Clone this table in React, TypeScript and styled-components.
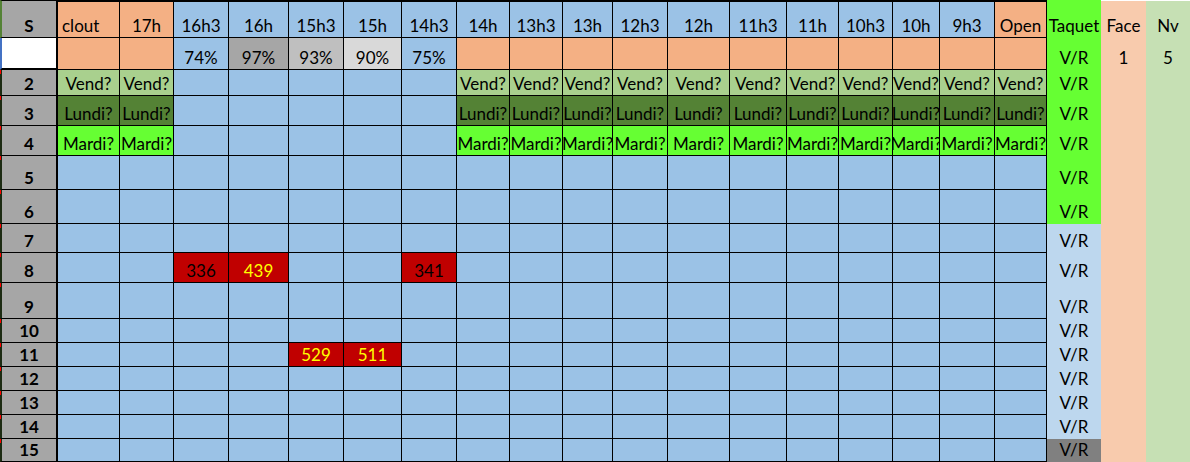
import React from "react";
import styled, { createGlobalStyle } from "styled-components";

const GlobalStyle = createGlobalStyle`
  html, body {
    margin: 0;
    padding: 0;
    background: #ffffff;
    overflow: hidden;
  }
  body {
    font-family: Lato, "Liberation Sans", sans-serif;
  }
`;

const C = {
  grey: "#a6a6a6",
  orange: "#f4b084",
  blue: "#9bc2e6",
  lightGreen: "#a9d08e",
  darkGreen: "#548235",
  brightGreen: "#66ff33",
  red: "#c00000",
  yellow: "#ffff00",
  paleBlue: "#bdd7ee",
  midGrey: "#808080",
  face: "#f8cbad",
  nv: "#c6e0b4",
};

const colWidths = [58, 62, 54, 55, 60, 55, 58, 55, 53, 53, 50, 55, 62, 57, 52, 54, 47, 55, 52, 54, 45, 44];
const rowHeights = [38, 32, 26, 30, 30, 34, 34, 29, 30, 36, 24, 24, 24, 24, 24, 23];

const hours = ["clout", "17h", "16h3", "16h", "15h3", "15h", "14h3", "14h", "13h3", "13h", "12h3", "12h", "11h3", "11h", "10h3", "10h", "9h3", "Open"];

// columns that are orange in the header rows
const isOrange = (i: number) => i < 2 || i === hours.length - 1;
// columns with the day labels (left block + right block)
const hasDay = (i: number) => i < 2 || i >= 7;

const percents: Record<number, { text: string; bg: string }> = {
  2: { text: "74%", bg: C.blue },
  3: { text: "97%", bg: C.grey },
  4: { text: "93%", bg: "#bfbfbf" },
  5: { text: "90%", bg: "#d9d9d9" },
  6: { text: "75%", bg: C.blue },
};

const dayRows: Record<number, { text: string; bg: string }> = {
  2: { text: "Vend?", bg: C.lightGreen },
  3: { text: "Lundi?", bg: C.darkGreen },
  4: { text: "Mardi?", bg: C.brightGreen },
};

// red cells: row -> col -> value
const redCells: Record<number, Record<number, { text: string; fg: string }>> = {
  8: {
    2: { text: "336", fg: "#000" },
    3: { text: "439", fg: C.yellow },
    6: { text: "341", fg: "#000" },
  },
  11: {
    4: { text: "529", fg: C.yellow },
    5: { text: "511", fg: C.yellow },
  },
};

const Sheet = styled.div<{ $cols: string; $rows: string }>`
  display: grid;
  grid-template-columns: ${(p) => p.$cols};
  grid-template-rows: ${(p) => p.$rows};
  width: 1190px;
  height: 462px;
  font-size: 17px;
  line-height: 20px;
  color: #000;
`;

const RowHead = styled.div<{ $edge: string; $bg: string; $tick?: boolean; $top?: boolean; $thickBottom?: boolean }>`
  position: relative;
  display: flex;
  align-items: flex-end;
  justify-content: center;
  padding-bottom: 1px;
  background: ${(p) => p.$bg};
  font-weight: 700;
  border-left: 2px solid ${(p) => p.$edge};
  border-right: 2px solid #000;
  border-top: ${(p) => (p.$top ? "1px solid #000" : "none")};
  border-bottom: ${(p) => (p.$thickBottom ? "2px" : "1px")} solid #000;

  &::before {
    content: "";
    display: ${(p) => (p.$tick ? "block" : "none")};
    position: absolute;
    left: -2px;
    top: 0;
    width: 1px;
    height: 4px;
    background: #ff0000;
  }
`;

const Cell = styled.div<{ $bg: string; $fg?: string; $left?: boolean; $top?: boolean }>`
  display: flex;
  align-items: flex-end;
  justify-content: ${(p) => (p.$left ? "flex-start" : "center")};
  padding: 0 0 1px ${(p) => (p.$left ? "4px" : "0")};
  background: ${(p) => p.$bg};
  color: ${(p) => p.$fg ?? "#000"};
  white-space: nowrap;
  overflow: hidden;
  border-right: 1px solid #000;
  border-bottom: 1px solid #000;
  border-top: ${(p) => (p.$top ? "2px solid #000" : "none")};
`;

const SideCell = styled.div<{ $bg: string; $top?: boolean }>`
  display: flex;
  align-items: flex-end;
  justify-content: center;
  padding-bottom: 2px;
  background: ${(p) => p.$bg};
  white-space: nowrap;
  border-top: ${(p) => (p.$top ? "1px solid #ffffff" : "none")};
`;

const taquetBg = (r: number) => (r <= 6 ? C.brightGreen : r === 15 ? C.midGrey : C.paleBlue);

function dataCell(r: number, c: number) {
  if (r === 0) {
    return (
      <Cell key={c} $top $left={c === 0} $bg={isOrange(c) ? C.orange : C.blue}>
        {hours[c]}
      </Cell>
    );
  }
  if (r === 1) {
    const p = percents[c];
    return (
      <Cell key={c} $bg={p ? p.bg : isOrange(c) || c >= 7 ? C.orange : C.blue}>
        {p?.text}
      </Cell>
    );
  }
  const day = dayRows[r];
  if (day && hasDay(c)) {
    return (
      <Cell key={c} $bg={day.bg}>
        {day.text}
      </Cell>
    );
  }
  const red = redCells[r]?.[c];
  if (red) {
    return (
      <Cell key={c} $bg={C.red} $fg={red.fg}>
        {red.text}
      </Cell>
    );
  }
  return <Cell key={c} $bg={C.blue} />;
}

export default function App() {
  const rows = rowHeights.map((_, r) => r);

  return (
    <>
      <GlobalStyle />
      <Sheet
        $cols={colWidths.map((w) => `${w}px`).join(" ")}
        $rows={rowHeights.map((h) => `${h}px`).join(" ")}
      >
        {rows.map((r) => (
          <React.Fragment key={r}>
            <RowHead
              $top={r === 0}
              $tick={r >= 2}
              $thickBottom={r === 1}
              $bg={r === 1 ? "#ffffff" : C.grey}
              $edge={r === 0 ? C.darkGreen : r === 1 ? "#4472c4" : "#1c2b12"}
            >
              {r === 0 ? "S" : r === 1 ? "" : r}
            </RowHead>
            {hours.map((_, c) => dataCell(r, c))}
            <SideCell $bg={taquetBg(r)}>{r === 0 ? "Taquet" : "V/R"}</SideCell>
            <SideCell $top={r === 0} $bg={C.face}>
              {r === 0 ? "Face" : r === 1 ? "1" : ""}
            </SideCell>
            <SideCell $top={r === 0} $bg={C.nv}>
              {r === 0 ? "Nv" : r === 1 ? "5" : ""}
            </SideCell>
          </React.Fragment>
        ))}
      </Sheet>
    </>
  );
}
